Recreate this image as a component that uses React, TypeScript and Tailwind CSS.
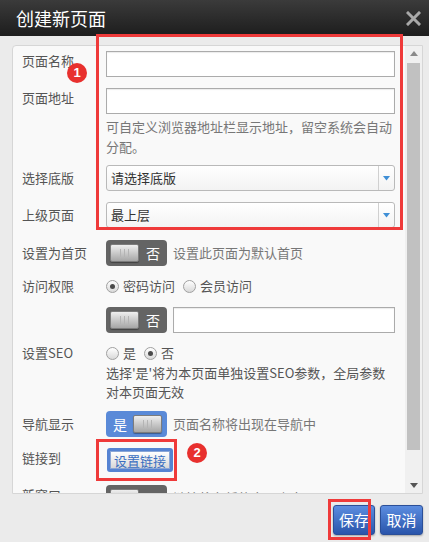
import React from "react";

function Knob() {
    return (
        <div className="flex h-[18px] w-[29px] items-center justify-center gap-[3px] rounded-[2px] border border-[#7c7c7c] bg-linear-to-b from-[#efefef] to-[#a6a6a6] shadow-[0_1px_1px_rgba(0,0,0,0.35)]">
            <span className="h-[8px] w-px bg-[#b4b4b4]" />
            <span className="h-[8px] w-px bg-[#b4b4b4]" />
            <span className="h-[8px] w-px bg-[#b4b4b4]" />
        </div>
    );
}

function ToggleOff() {
    return (
        <div className="flex h-[26px] w-[61px] shrink-0 items-center rounded-[4px] bg-[#646464] pl-[4px]">
            <Knob />
            <span className="ml-[7px] text-[14px] leading-none text-white">否</span>
        </div>
    );
}

function ToggleOn() {
    return (
        <div className="flex h-[26px] w-[61px] shrink-0 items-center rounded-[4px] bg-[#5a8ad8] pl-[7px]">
            <span className="text-[14px] leading-none text-white">是</span>
            <span className="ml-[6px]">
                <Knob />
            </span>
        </div>
    );
}

function Radio({ checked }: { checked?: boolean }) {
    return (
        <span className="flex h-[13px] w-[13px] shrink-0 items-center justify-center rounded-full border border-[#a0a0a0] bg-linear-to-b from-white to-[#d9d9d9]">
            {checked && <span className="h-[5px] w-[5px] rounded-full bg-[#4a4a4a]" />}
        </span>
    );
}

function Select({ value }: { value: string }) {
    return (
        <div className="flex h-[26px] flex-1 items-center rounded-[3px] border border-[#b9b9b9] bg-linear-to-b from-white to-[#f3f3f3]">
            <span className="flex-1 pl-[4px] text-[13px] text-[#333]">{value}</span>
            <span className="flex h-full w-[16px] items-center justify-center border-l border-[#d0d0d0]">
                <svg width="7" height="5" viewBox="0 0 7 5">
                    <path d="M0 0 H7 L3.5 4.5 Z" fill="#3f8fd6" />
                </svg>
            </span>
        </div>
    );
}

function Label({ children }: { children: React.ReactNode }) {
    return <div className="w-[84px] shrink-0 text-[13px] leading-[20px] text-[#555]">{children}</div>;
}

function Badge({ n, className }: { n: string; className: string }) {
    return (
        <div className={`absolute flex h-[20px] w-[20px] items-center justify-center rounded-full bg-[#e8302e] font-['Liberation_Sans',sans-serif] text-[13px] font-bold text-white ${className}`}>
            {n}
        </div>
    );
}

export default function App() {
    return (
        <div className="relative flex h-[542px] w-[429px] flex-col overflow-hidden bg-[#ebebeb] font-['Noto_Sans_CJK_SC','Noto_Sans',sans-serif]">
            {/* header */}
            <div className="flex h-[36px] shrink-0 items-center justify-between bg-linear-to-b from-[#3b3b3b] to-[#1d1d1d] pl-[16px] pr-[8px]">
                <span className="text-[18px] leading-none text-white">创建新页面</span>
                <svg width="15" height="15" viewBox="0 0 15 15">
                    <path d="M2 2 L13 13 M13 2 L2 13" stroke="#a8a8a8" strokeWidth="3" strokeLinecap="square" />
                </svg>
            </div>

            {/* panel */}
            <div className="ml-[12px] mr-[6px] mt-[9px] flex h-[449px] shrink-0 overflow-hidden rounded-tl-[4px] border border-[#d6d6d6] bg-[#f9f9f9]">
                <div className="flex-1 overflow-hidden pl-[9px] pr-[10px] pt-[5px]">
                    <div className="flex">
                        <Label>页面名称</Label>
                        <input className="h-[26px] flex-1 border border-[#ababab] bg-white shadow-[inset_0_1px_1px_rgba(0,0,0,0.08)]" />
                    </div>

                    <div className="mt-[11px] flex">
                        <Label>页面地址</Label>
                        <div className="flex-1">
                            <input className="block h-[26px] w-full border border-[#ababab] bg-white shadow-[inset_0_1px_1px_rgba(0,0,0,0.08)]" />
                            <p className="mt-[3px] text-[13px] leading-[20px] text-[#777]">
                                可自定义浏览器地址栏显示地址，留空系统会自动分配。
                            </p>
                        </div>
                    </div>

                    <div className="mt-[8px] flex items-center">
                        <Label>选择底版</Label>
                        <Select value="请选择底版" />
                    </div>

                    <div className="mt-[11px] flex items-center">
                        <Label>上级页面</Label>
                        <Select value="最上层" />
                    </div>

                    <div className="mt-[12px] flex items-center">
                        <Label>设置为首页</Label>
                        <ToggleOff />
                        <span className="ml-[6px] text-[13px] text-[#777]">设置此页面为默认首页</span>
                    </div>

                    <div className="mt-[10px] flex items-center">
                        <Label>访问权限</Label>
                        <div className="flex items-center text-[13px] leading-[20px] text-[#555]">
                            <Radio checked />
                            <span className="ml-[4px]">密码访问</span>
                            <span className="ml-[8px]">
                                <Radio />
                            </span>
                            <span className="ml-[4px]">会员访问</span>
                        </div>
                    </div>

                    <div className="mt-[11px] flex items-center">
                        <div className="w-[84px] shrink-0" />
                        <ToggleOff />
                        <input className="ml-[6px] h-[26px] flex-1 border border-[#ababab] bg-white shadow-[inset_0_1px_1px_rgba(0,0,0,0.08)]" />
                    </div>

                    <div className="mt-[10px] flex">
                        <Label>设置SEO</Label>
                        <div className="flex-1">
                            <div className="flex items-center text-[13px] leading-[20px] text-[#555]">
                                <Radio />
                                <span className="ml-[4px]">是</span>
                                <span className="ml-[8px]">
                                    <Radio checked />
                                </span>
                                <span className="ml-[4px]">否</span>
                            </div>
                            <p className="text-[13px] leading-[19px] text-[#555]">
                                选择'是'将为本页面单独设置SEO参数，全局参数对本页面无效
                            </p>
                        </div>
                    </div>

                    <div className="mt-[10px] flex items-center">
                        <Label>导航显示</Label>
                        <ToggleOn />
                        <span className="ml-[6px] text-[13px] text-[#777]">页面名称将出现在导航中</span>
                    </div>

                    <div className="mt-[11px] flex items-start">
                        <Label>链接到</Label>
                        <div className="ml-[1px] flex h-[24px] items-center rounded-[3px] bg-[#5583d2] px-[3px]">
                            <div className="flex h-[18px] items-center border border-[#8aa6d6] bg-linear-to-b from-white to-[#d8d8d8] px-[3px] text-[13px] leading-none text-[#3a6ec0]">
                                设置链接
                            </div>
                        </div>
                    </div>

                    <div className="mt-[13px] flex items-start">
                        <Label>新窗口</Label>
                        <ToggleOff />
                        <span className="ml-[6px] text-[13px] leading-[26px] text-[#777]">链接将在新的窗口中出现</span>
                    </div>
                </div>

                {/* scrollbar */}
                <div className="flex w-[17px] shrink-0 flex-col items-center bg-[#f0f0f0]">
                    <div className="flex h-[14px] items-center justify-center">
                        <svg width="8" height="5" viewBox="0 0 8 5">
                            <path d="M0 5 H8 L4 0 Z" fill="#8a8a8a" />
                        </svg>
                    </div>
                    <div className="mt-[3px] h-[387px] w-[13px] bg-[#c1c1c1]" />
                    <div className="flex-1" />
                    <div className="flex h-[16px] items-center justify-center">
                        <svg width="8" height="5" viewBox="0 0 8 5">
                            <path d="M0 0 H8 L4 5 Z" fill="#555" />
                        </svg>
                    </div>
                </div>
            </div>

            {/* footer */}
            <div className="mt-[11px] flex justify-end gap-[5px] pr-[6px]">
                <button className="h-[30px] w-[42px] rounded-[3px] border border-[#2b4f98] bg-linear-to-b from-[#5c8de0] to-[#2a55ab] text-[15px] text-white shadow-[0_1px_2px_rgba(0,0,0,0.3)]">
                    保存
                </button>
                <button className="h-[30px] w-[43px] rounded-[3px] border border-[#2b4f98] bg-linear-to-b from-[#5c8de0] to-[#2a55ab] text-[15px] text-white shadow-[0_1px_2px_rgba(0,0,0,0.3)]">
                    取消
                </button>
            </div>

            {/* annotations */}
            <div className="absolute left-[96px] top-[34px] h-[196px] w-[307px] border-[3px] border-[#ef3a3a]" />
            <Badge n="1" className="left-[67px] top-[63px]" />
            <div className="absolute left-[96px] top-[439px] h-[42px] w-[81px] border-[3px] border-[#ef3a3a]" />
            <Badge n="2" className="left-[187px] top-[443px]" />
            <div className="absolute left-[328px] top-[499px] h-[41px] w-[43px] border-[3px] border-[#ef3a3a]" />
        </div>
    );
}
